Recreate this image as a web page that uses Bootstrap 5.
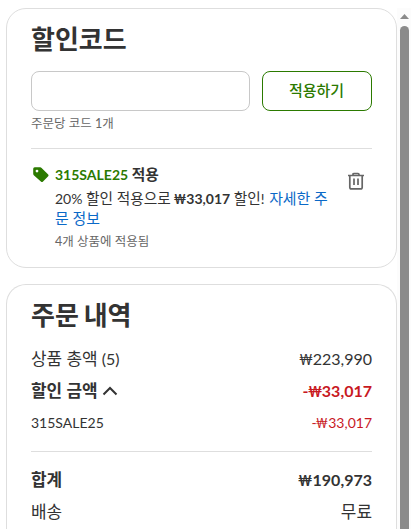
<!DOCTYPE html>
<html lang="ko">
<head>
<meta charset="utf-8">
<meta name="viewport" content="width=device-width, initial-scale=1">
<title>주문 내역</title>
<link href="https://cdn.jsdelivr.net/npm/bootstrap@5.3.0/dist/css/bootstrap.min.css" rel="stylesheet">
<style>
html, body { height: 100%; overflow: hidden; }
body { font-family: Lato, "Noto Sans CJK KR", sans-serif; color: #333; font-size: 16px; line-height: 24px; background: #fff; }
.cart-pane { width: 397px; height: 529px; overflow: hidden; padding: 8px 0 0 6px; }
.panel { border: 1px solid #dedede; border-radius: 20px; padding: 0 24px; }
.promo-panel { height: 260px; margin-bottom: 16px; }
.sum-panel { height: 245px; border-bottom: 0; border-radius: 20px 20px 0 0; }
.panel-title { font-size: 26px; line-height: 32px; font-weight: 700; margin: 0; padding-top: 14px; word-spacing: -1.5px; }
.code-row { margin-top: 16px; gap: 12px; height: 40px; }
.code-input { border: 1px solid #c8c8c8; border-radius: 8px; width: 219px; box-shadow: none; }
.apply-btn { --bs-btn-color: #2b7a00; --bs-btn-border-color: #2b7a00; --bs-btn-hover-bg: #2b7a00; --bs-btn-font-size: 15px; --bs-btn-font-weight: 500; --bs-btn-line-height: 20px; border-radius: 8px; width: 110px; padding: 0 1px 2px 0; }
.hint { font-size: 12.5px; line-height: 18px; color: #666; }
.code-rule { margin-top: 15px; }
.rule { border-top: 1px solid #dedede; }
.promo { font-size: 14px; line-height: 20px; }
.promo-tag { margin: 16px 0 0 1px; }
.promo-text { width: 281px; margin-left: 6px; }
.promo-text .ko { font-size: 1.05em; }
.promo-text .promo-link { font-size: 1.065em; margin-left: 1px; }
.promo-remove { margin: 23px 0 0 11px; }
.green { color: #2b7a00; }
.promo-link { color: #0a69c7; text-decoration: none; }
.line { height: 32px; }
.total-rule { margin: 12px 0; }
.ko { font-size: 1.06em; line-height: 1; }
.fw-bold .ko { font-weight: 600; }
.won { display: inline-block; transform: scaleX(.82); transform-origin: right; margin-left: -.24em; line-height: 1; }
.red { color: #c8191f; }
.scroll-track { width: 14px; margin-top: 8px; background: #fcfcfc; }
.scroll-arrow { margin-top: 6px; }
.scroll-thumb { width: 9px; margin-top: 7px; border-radius: 5px 5px 0 0; background: #8b8b8b; }
</style>
<script src="https://cdn.jsdelivr.net/npm/bootstrap@5.3.0/dist/js/bootstrap.bundle.min.js"></script>
</head>
<body class="d-flex">
<main class="cart-pane flex-shrink-0">
  <section class="panel promo-panel">
    <h2 class="panel-title">할인코드</h2>
    <form class="code-row d-flex">
      <input class="form-control code-input" type="text" aria-label="할인코드">
      <button class="btn apply-btn" type="button">적용하기</button>
    </form>
    <div class="hint mt-1">주문당 코드 1개</div>
    <div class="rule code-rule"></div>
    <div class="promo d-flex align-items-start">
      <svg class="promo-tag flex-shrink-0" width="17" height="20" viewBox="0 0 17 20" fill="#2b7a00" aria-hidden="true"><path fill-rule="evenodd" d="M1.2 3.8Q1.2 2.3 2.7 2.3H8.2Q9 2.3 9.6 2.9L16.2 9.5Q17 10.4 16.2 11.3L10.8 16.7Q10 17.5 9.1 16.7L1.8 10.2Q1.2 9.6 1.2 8.8ZM5 4.7a1.4 1.4 0 1 0 0 2.8 1.4 1.4 0 0 0 0-2.8Z"/></svg>
      <div class="promo-text pt-3">
        <div><span class="green fw-bold">315SALE25</span> <span class="ko fw-semibold">적용</span></div>
        <div class="mt-1">20% <span class="ko">할인 적용으로</span> <b><span class="won">₩</span>33,017</b> <span class="ko">할인</span>! <a class="promo-link ko" href="#">자세한 주</a><br><a class="promo-link ko ms-0" href="#">문 정보</a></div>
        <div class="hint mt-1">4개 상품에 적용됨</div>
      </div>
      <svg class="promo-remove flex-shrink-0" width="18" height="18" viewBox="0 0 18 18" fill="none" stroke="#666" stroke-width="1.7" aria-hidden="true"><path d="M1 3.5H17M6 3.2V2.4Q6 1.5 7 1.5H11Q12 1.5 12 2.4V3.2M2.8 3.5V15.2Q2.8 16.9 4.5 16.9H13.5Q15.2 16.9 15.2 15.2V3.5M7 6.5V13M11 6.5V13"/></svg>
    </div>
  </section>
  <section class="panel sum-panel">
    <h2 class="panel-title">주문 내역</h2>
    <div class="pt-2 mt-1">
      <div class="line d-flex justify-content-between align-items-center"><span><span class="ko">상품 총액</span> (5)</span><span><span class="won">₩</span>223,990</span></div>
      <div class="line d-flex justify-content-between align-items-center fw-bold"><span class="d-flex align-items-center"><span class="ko">할인 금액</span><svg class="ms-1" width="16" height="12" viewBox="0 0 16 12" fill="none" stroke="#333" stroke-width="2" aria-hidden="true"><path d="M1.5 9.5 8 3 14.5 9.5"/></svg></span><span class="red">-<span class="won">₩</span>33,017</span></div>
      <div class="line d-flex justify-content-between align-items-center promo"><span>315SALE25</span><span class="red">-<span class="won">₩</span>33,017</span></div>
    </div>
    <div class="rule total-rule"></div>
    <div class="line d-flex justify-content-between align-items-center fw-bold"><span class="ko">합계</span><span><span class="won">₩</span>190,973</span></div>
    <div class="line d-flex justify-content-between align-items-center"><span class="ko">배송</span><span class="ko">무료</span></div>
  </section>
</main>
<div class="scroll-track d-flex flex-column align-items-center flex-shrink-0" aria-hidden="true">
  <svg class="scroll-arrow flex-shrink-0" width="9" height="5" viewBox="0 0 9 5"><path d="M4.5 0 9 5H0Z" fill="#8b8b8b"/></svg>
  <div class="scroll-thumb flex-grow-1"></div>
</div>
</body>
</html>
